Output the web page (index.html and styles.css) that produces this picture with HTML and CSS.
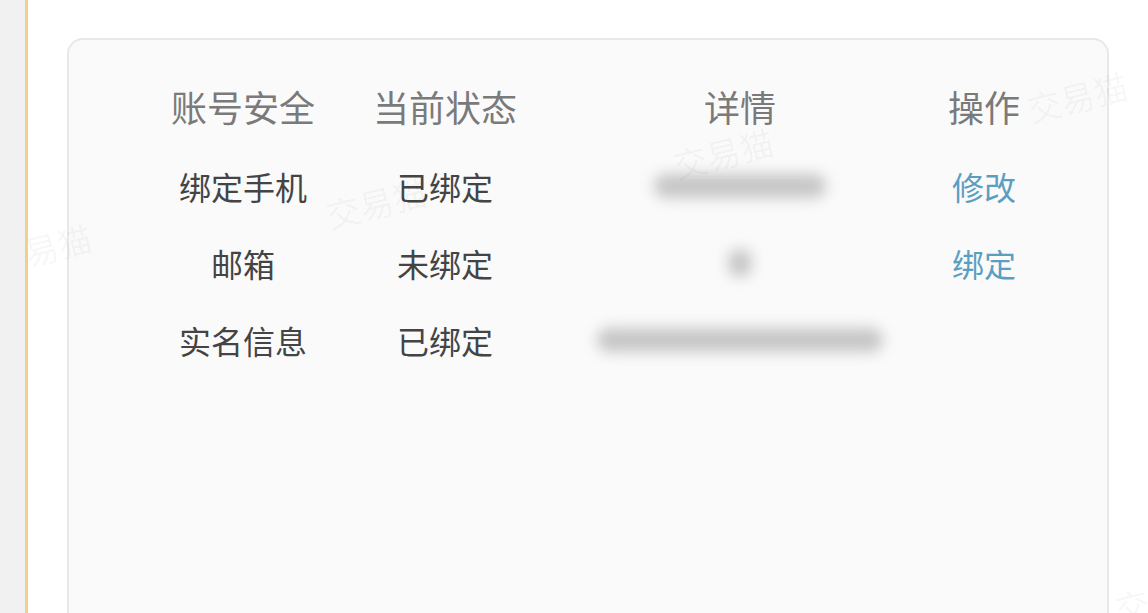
FILE: index.html
```html
<!DOCTYPE html>
<html lang="zh-CN">
<head>
    <meta charset="UTF-8">
    <meta name="viewport" content="width=device-width, initial-scale=1.0">
    <title>账号安全</title>
    <link rel="stylesheet" href="styles.css">
</head>
<body>
    <div class="side"></div>
    <main class="main">
        <div class="card">
            <div class="table">
                <div class="th">账号安全</div>
                <div class="th">当前状态</div>
                <div class="th">详情</div>
                <div class="th">操作</div>

                <div class="td">绑定手机</div>
                <div class="td">已绑定</div>
                <div class="td"><span class="masked masked-phone"></span></div>
                <div class="td"><a class="action" href="#">修改</a></div>

                <div class="td">邮箱</div>
                <div class="td">未绑定</div>
                <div class="td"><span class="masked masked-dot"></span></div>
                <div class="td"><a class="action" href="#">绑定</a></div>

                <div class="td">实名信息</div>
                <div class="td">已绑定</div>
                <div class="td"><span class="masked masked-id"></span></div>
                <div class="td"></div>
            </div>
        </div>

        <!-- watermark -->
        <span class="wm wm-1">交易猫</span>
        <span class="wm wm-2">交易猫</span>
        <span class="wm wm-3">交易猫</span>
        <span class="wm wm-4">交易猫</span>
        <span class="wm wm-5">交易猫</span>
    </main>
</body>
</html>
```

FILE: styles.css
```css
body {
    margin: 0;
    height: 613px;
    display: flex;
    overflow: hidden;
    background: #ffffff;
    font-family: "Noto Sans CJK SC", "Noto Sans", sans-serif;
}
.side {
    width: 25px;
    flex-shrink: 0;
    background: #f1f1f1;
    border-right: 3px solid #f1d08f;
}
.main {
    position: relative;
    flex: 1;
    overflow: hidden;
    padding: 38px 0 0 39px;
}
.card {
    width: 1038px;
    height: 600px;
    background: #fafafa;
    border: 2px solid #e8e8e8;
    border-radius: 16px;
}
.table {
    display: grid;
    grid-template-columns: 200px 204px 386px 102px;
    grid-template-rows: 82px 77px 77px 77px;
    padding: 25px 0 0 74px;
}
.th,
.td {
    display: flex;
    align-items: center;
    justify-content: center;
    white-space: nowrap;
}
.th {
    font-size: 36px;
    color: #7a7a7a;
}
.td {
    font-size: 32px;
    color: #444444;
}
.action {
    color: #5a9fc2;
    text-decoration: none;
}
.masked {
    display: block;
    height: 24px;
    background: #c6c6c6;
    border-radius: 12px;
    filter: blur(7px);
}
.masked-phone {
    width: 172px;
}
.masked-dot {
    width: 24px;
    height: 28px;
}
.masked-id {
    width: 286px;
}
.wm {
    position: absolute;
    font-size: 34px;
    color: rgba(0, 0, 0, 0.045);
    transform: rotate(-14deg);
    white-space: nowrap;
    pointer-events: none;
}
.wm-1 { left: 998px; top: 72px; }
.wm-2 { left: 644px; top: 128px; }
.wm-3 { left: 297px; top: 178px; }
.wm-4 { left: -38px; top: 224px; }
.wm-5 { left: 1086px; top: 572px; }
```
